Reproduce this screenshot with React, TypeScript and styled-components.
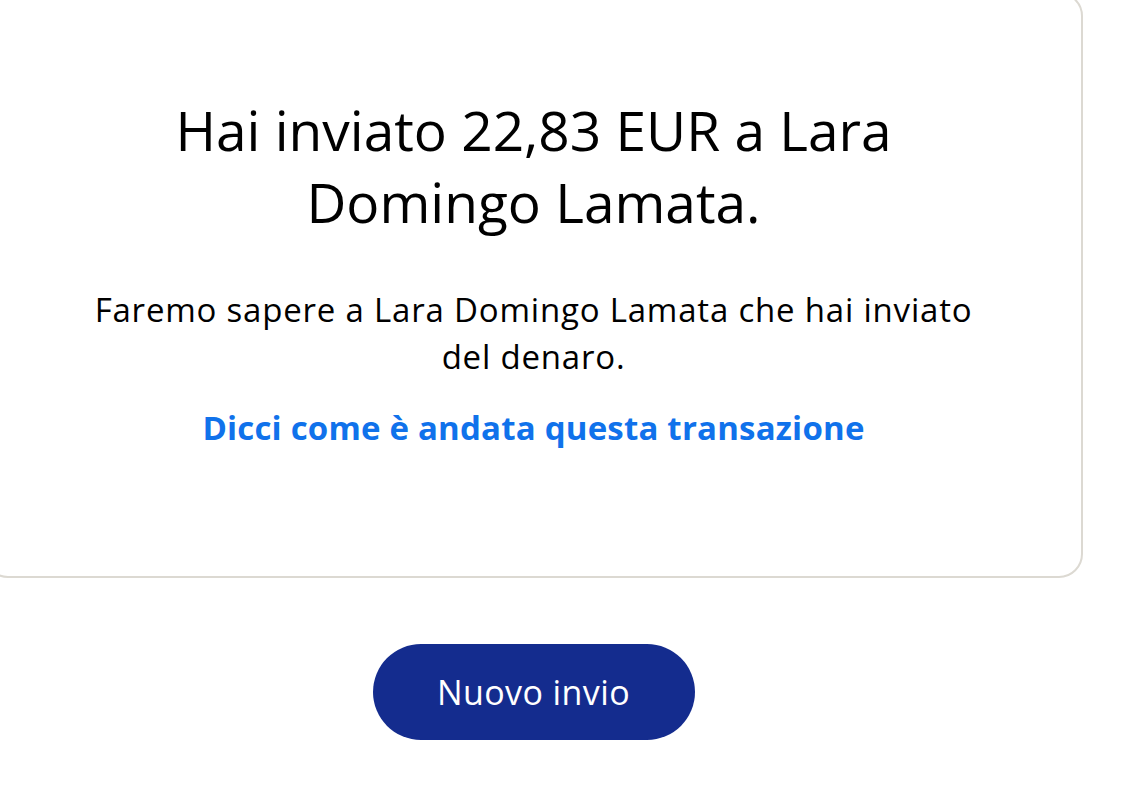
import * as React from "react";
import styled, { createGlobalStyle } from "styled-components";

const GlobalStyle = createGlobalStyle`
  html, body {
    margin: 0;
    padding: 0;
    background: #ffffff;
    overflow: hidden;
  }
  body {
    font-family: "Open Sans", "Noto Sans", sans-serif;
    color: #000000;
  }
`;

const Page = styled.main`
  width: 1099px;
  margin: -8px 0 0 -16px;
  display: flex;
  flex-direction: column;
  align-items: center;
`;

const Card = styled.section`
  box-sizing: border-box;
  width: 100%;
  height: 586px;
  border: 2px solid #dcd9d2;
  border-radius: 24px;
  padding: 100px 40px 0;
  display: flex;
  flex-direction: column;
  align-items: center;
  text-align: center;
`;

const Heading = styled.h1`
  margin: 0;
  max-width: 760px;
  font-size: 55px;
  line-height: 72px;
  font-weight: 400;
`;

const Message = styled.p`
  margin: 48px 0 0;
  max-width: 920px;
  font-size: 33px;
  line-height: 47px;
  letter-spacing: 0.8px;
`;

const FeedbackLink = styled.a`
  margin-top: 25px;
  font-size: 33px;
  line-height: 46px;
  font-weight: 700;
  letter-spacing: 0.2px;
  color: #1072eb;
  text-decoration: none;
  cursor: pointer;
`;

const PrimaryButton = styled.button`
  margin-top: 66px;
  width: 322px;
  height: 96px;
  border: 0;
  border-radius: 48px;
  background: #142c8e;
  color: #ffffff;
  font-family: inherit;
  font-size: 34px;
  letter-spacing: 0.4px;
  cursor: pointer;
`;

export default function App() {
  return (
    <>
      <GlobalStyle />
      <Page>
        <Card>
          <Heading>Hai inviato 22,83 EUR a Lara Domingo Lamata.</Heading>
          <Message>
            Faremo sapere a Lara Domingo Lamata che hai inviato del denaro.
          </Message>
          <FeedbackLink>Dicci come è andata questa transazione</FeedbackLink>
        </Card>
        <PrimaryButton>Nuovo invio</PrimaryButton>
      </Page>
    </>
  );
}
